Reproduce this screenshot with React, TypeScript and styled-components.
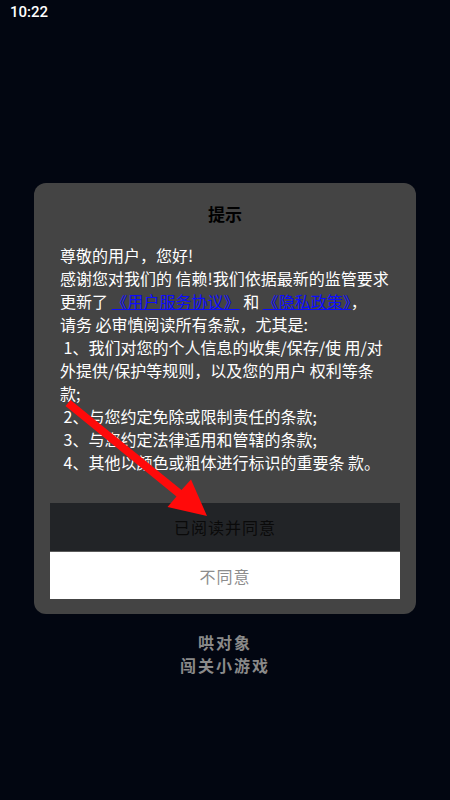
import React from 'react';
import styled, { createGlobalStyle } from 'styled-components';

const GlobalStyle = createGlobalStyle`
  html, body {
    margin: 0;
    padding: 0;
    background: #020611;
  }
  body {
    font-family: "Noto Sans CJK SC", "Noto Sans", sans-serif;
  }
`;

const Screen = styled.div`
  width: 450px;
  height: 800px;
  background: #020611;
  display: flex;
  flex-direction: column;
  align-items: center;
  overflow: hidden;
`;

const StatusBar = styled.div`
  align-self: stretch;
  height: 24px;
  padding-left: 10px;
  display: flex;
  align-items: center;
  color: #ffffff;
  font-family: Roboto, "Noto Sans", sans-serif;
  font-size: 15px;
  font-weight: 500;
`;

const Dialog = styled.div`
  position: relative;
  margin-top: 159px;
  width: 382px;
  box-sizing: border-box;
  padding: 18px 16px 15px;
  background: #444444;
  border-radius: 12px;
  display: flex;
  flex-direction: column;
`;

const Title = styled.div`
  text-align: center;
  color: #000000;
  font-size: 17px;
  font-weight: 700;
  line-height: 26px;
`;

const Body = styled.div`
  margin: 17px 10px 0 10px;
  color: #ffffff;
  font-size: 16px;
  line-height: 23px;
  white-space: pre-wrap;
`;

const Line = styled.div``;

const Link = styled.span`
  color: #0c0cff;
  text-decoration: underline;
`;

const Actions = styled.div`
  margin-top: 29px;
  display: flex;
  flex-direction: column;
`;

const ActionButton = styled.button<{ $light?: boolean }>`
  height: 48px;
  border: none;
  margin: 0;
  padding: 0;
  font-family: inherit;
  font-size: 16px;
  letter-spacing: 1px;
  background: ${({ $light }) => ($light ? '#ffffff' : '#222427')};
  color: ${({ $light }) => ($light ? '#8c8c8c' : '#0a0a0a')};
  border-top: ${({ $light }) => ($light ? '1px solid #5a5a5a' : 'none')};
  cursor: pointer;
`;

const Arrow = styled.svg`
  position: absolute;
  left: 0;
  top: 0;
  width: 382px;
  height: 430px;
  pointer-events: none;
  overflow: visible;
`;

const Footer = styled.div`
  margin-top: 17px;
  text-align: center;
  color: #8a8a8a;
  font-size: 16px;
  font-weight: 700;
  line-height: 23px;
  letter-spacing: 2px;
`;

export default function App() {
  return (
    <>
      <GlobalStyle />
      <Screen>
        <StatusBar>10:22</StatusBar>
        <Dialog>
          <Title>提示</Title>
          <Body>
            <Line>尊敬的用户，您好!</Line>
            <Line>
              感谢您对我们的 信赖!我们依据最新的监管要求更新了 <Link>《用户服务协议》</Link> 和 <Link>《隐私政策》</Link>，
            </Line>
            <Line>请务 必审慎阅读所有条款，尤其是:</Line>
            <Line> 1、我们对您的个人信息的收集/保存/使 用/对外提供/保护等规则，以及您的用户 权利等条款;</Line>
            <Line> 2、与您约定免除或限制责任的条款;</Line>
            <Line> 3、与您约定法律适用和管辖的条款;</Line>
            <Line> 4、其他以颜色或粗体进行标识的重要条 款。</Line>
          </Body>
          <Actions>
            <ActionButton>已阅读并同意</ActionButton>
            <ActionButton $light>不同意</ActionButton>
          </Actions>
          <Arrow viewBox="0 0 382 430">
            <polygon
              points="36.5,216.9 147.5,307 157,296.5 173,333 133.5,324 142.5,313.5 31.5,223.1"
              fill="#ff0a0a"
            />
          </Arrow>
        </Dialog>
        <Footer>
          <div>哄对象</div>
          <div>闯关小游戏</div>
        </Footer>
      </Screen>
    </>
  );
}
